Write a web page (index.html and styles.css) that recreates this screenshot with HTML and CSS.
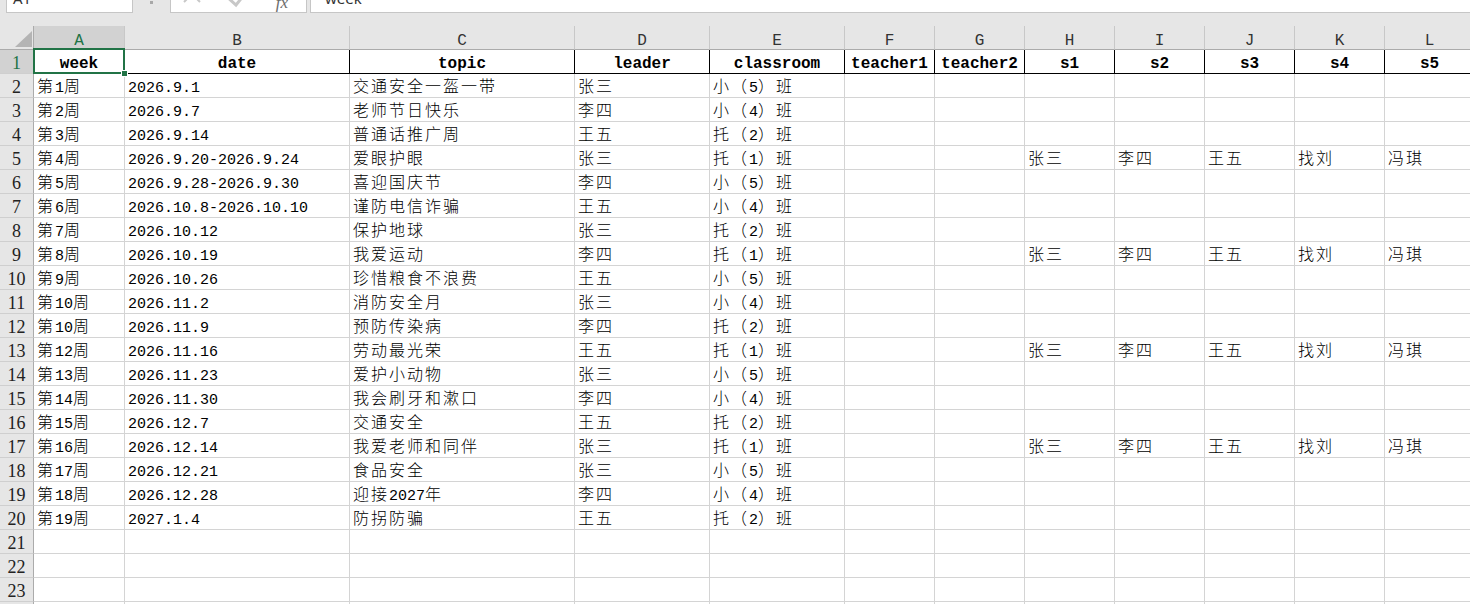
FILE: index.html
```html
<!DOCTYPE html>
<html lang="zh-CN">
<head>
    <meta charset="UTF-8">
    <meta name="viewport" content="width=device-width, initial-scale=1.0">
    <title>主题活动安排</title>
    <link rel="stylesheet" href="styles.css">
</head>
<body>
    <div class="formula-bar">
        <div class="name-box">A1</div>
        <div class="bar-grip"></div>
        <div class="bar-buttons">
            <span class="bar-btn">
                <svg width="30" height="30" viewBox="0 0 30 30"><path d="M7 2 L23 18 M23 2 L7 18" stroke="#c8c8c8" stroke-width="2" fill="none"/></svg>
            </span>
            <span class="bar-btn">
                <svg width="30" height="30" viewBox="0 0 30 30"><path d="M4 12 L14 21 L26 6" stroke="#c8c8c8" stroke-width="3" fill="none"/></svg>
            </span>
            <span class="bar-btn fx">fx</span>
        </div>
        <div class="formula-input">week</div>
    </div>

    <div class="sheet" id="sheet">
        <!-- cells are generated below -->
    </div>

    <script>
        const COLS = ["A", "B", "C", "D", "E", "F", "G", "H", "I", "J", "K", "L"];
        const TOTAL_ROWS = 24;

        const header = ["week", "date", "topic", "leader", "classroom", "teacher1", "teacher2", "s1", "s2", "s3", "s4", "s5"];

        const plan = [
            ["第1周", "2026.9.1", "交通安全一盔一带", "张三", "小（5）班"],
            ["第2周", "2026.9.7", "老师节日快乐", "李四", "小（4）班"],
            ["第3周", "2026.9.14", "普通话推广周", "王五", "托（2）班"],
            ["第4周", "2026.9.20-2026.9.24", "爱眼护眼", "张三", "托（1）班"],
            ["第5周", "2026.9.28-2026.9.30", "喜迎国庆节", "李四", "小（5）班"],
            ["第6周", "2026.10.8-2026.10.10", "谨防电信诈骗", "王五", "小（4）班"],
            ["第7周", "2026.10.12", "保护地球", "张三", "托（2）班"],
            ["第8周", "2026.10.19", "我爱运动", "李四", "托（1）班"],
            ["第9周", "2026.10.26", "珍惜粮食不浪费", "王五", "小（5）班"],
            ["第10周", "2026.11.2", "消防安全月", "张三", "小（4）班"],
            ["第10周", "2026.11.9", "预防传染病", "李四", "托（2）班"],
            ["第12周", "2026.11.16", "劳动最光荣", "王五", "托（1）班"],
            ["第13周", "2026.11.23", "爱护小动物", "张三", "小（5）班"],
            ["第14周", "2026.11.30", "我会刷牙和漱口", "李四", "小（4）班"],
            ["第15周", "2026.12.7", "交通安全", "王五", "托（2）班"],
            ["第16周", "2026.12.14", "我爱老师和同伴", "张三", "托（1）班"],
            ["第17周", "2026.12.21", "食品安全", "张三", "小（5）班"],
            ["第18周", "2026.12.28", "迎接2027年", "李四", "小（4）班"],
            ["第19周", "2027.1.4", "防拐防骗", "王五", "托（2）班"],
        ];

        // the 托（1）班 weeks get the student list in s1..s5
        const students = ["张三", "李四", "王五", "找刘", "冯琪"];
        plan.forEach(row => {
            if (row[4] === "托（1）班") row.push("", "", ...students);
        });

        // latin runs use the half-width font, the rest stays CJK
        function runs(text) {
            return text.replace(/[\x20-\x7e]+/g, m => `<span class="lat">${m}</span>`);
        }

        const sheet = document.getElementById("sheet");

        function addCell(cls, html) {
            const div = document.createElement("div");
            div.className = cls;
            div.innerHTML = html;
            sheet.appendChild(div);
            return div;
        }

        addCell("corner", "");
        COLS.forEach((c, i) => addCell(i === 0 ? "col-head active" : "col-head", c));

        for (let r = 1; r <= TOTAL_ROWS; r++) {
            addCell(r === 1 ? "row-head active" : "row-head", r);
            COLS.forEach((c, i) => {
                if (r === 1) {
                    const cell = addCell("cell title", header[i]);
                    if (i === 0) cell.classList.add("current");
                    return;
                }
                const data = plan[r - 2] || [];
                addCell("cell", runs(data[i] || ""));
            });
        }
    </script>
</body>
</html>
```

FILE: styles.css
```css
body {
    margin: 0;
    overflow: hidden;
    background: #ffffff;
    color: #000;
    font-family: "Noto Sans CJK SC", sans-serif;
}

/* formula bar, only its lower edge is in view */
.formula-bar {
    display: flex;
    align-items: flex-end;
    height: 13px;
    padding-bottom: 13px;
    background: #e6e6e6;
    overflow: hidden;
}
.name-box {
    box-sizing: border-box;
    flex: none;
    width: 127px;
    height: 30px;
    margin-left: 6px;
    padding-left: 6px;
    background: #fff;
    border: 1px solid #c6c6c6;
    font: 15px/28px "Noto Sans", sans-serif;
    color: #333;
}
.bar-grip {
    flex: none;
    display: flex;
    justify-content: center;
    width: 37px;
    height: 13px;
}
.bar-grip::after {
    content: "";
    width: 3px;
    height: 3px;
    margin-top: 1px;
    background: #a8a8a8;
}
.bar-buttons {
    box-sizing: border-box;
    flex: none;
    display: flex;
    gap: 15px;
    width: 137px;
    height: 30px;
    padding-left: 6px;
    background: #fff;
    border: 1px solid #c6c6c6;
}
.bar-btn {
    display: flex;
    justify-content: center;
    width: 30px;
    height: 30px;
}
.bar-btn.fx {
    font: italic 17px/38px "Liberation Serif", serif;
    color: #6b6b6b;
}
.formula-input {
    box-sizing: border-box;
    flex: 1;
    height: 30px;
    margin-left: 3px;
    padding-left: 14px;
    background: #fff;
    border: 1px solid #c6c6c6;
    border-right: none;
    font: 15px/28px "Noto Sans", sans-serif;
    color: #333;
}

/* worksheet grid */
.sheet {
    display: grid;
    grid-template-columns: 34px 91px 225px 225px 135px 135px repeat(7, 90px);
    grid-auto-rows: 24px;
    width: 1475px;
}
.sheet > div {
    box-sizing: border-box;
    overflow: hidden;
    white-space: nowrap;
}
.corner {
    display: flex;
    justify-content: flex-end;
    align-items: flex-end;
    padding: 0 1px 2px 0;
    background: #e6e6e6;
    border-right: 1px solid #ababab;
    border-bottom: 1px solid #ababab;
}
.corner::after {
    content: "";
    width: 17px;
    height: 16px;
    background: #b4b4b4;
    clip-path: polygon(100% 0, 100% 100%, 0 100%);
}
.col-head {
    padding-top: 5px;
    background: #e6e6e6;
    border-right: 1px solid #c8c8c8;
    border-bottom: 1px solid #ababab;
    font: 16px/20px "Liberation Mono", monospace;
    color: #333;
    text-align: center;
}
.row-head {
    padding-top: 3px;
    background: #e6e6e6;
    border-right: 1px solid #ababab;
    border-bottom: 1px solid #cfcfcf;
    font: 18px/20px "Liberation Serif", serif;
    color: #222;
    text-align: center;
}
.col-head.active, .row-head.active {
    background: #d2d2d2;
    color: #217346;
}

.cell {
    padding-left: 3px;
    border-right: 1px solid #d4d4d4;
    border-bottom: 1px solid #d4d4d4;
    font-size: 16px;
    font-weight: 300;
    line-height: 22px;
    letter-spacing: 2px;
}
.cell .lat {
    font: 15px "Liberation Mono", monospace;
    letter-spacing: 0;
}
.cell.title {
    padding: 4px 0 0;
    border-right-color: #000;
    border-bottom-color: #000;
    font: bold 16px/20px "Liberation Mono", monospace;
    letter-spacing: 0;
    text-align: center;
}

/* active cell frame with its fill handle */
.cell.current {
    position: relative;
    overflow: visible;
}
.cell.current::before {
    content: "";
    position: absolute;
    left: -1px;
    top: -2px;
    right: -1px;
    bottom: -1px;
    border: 2px solid #217346;
    z-index: 2;
}
.cell.current::after {
    content: "";
    position: absolute;
    left: 88px;
    top: 21px;
    width: 5px;
    height: 5px;
    background: #217346;
    box-shadow: 0 0 0 1px #fff;
    z-index: 3;
}
```
